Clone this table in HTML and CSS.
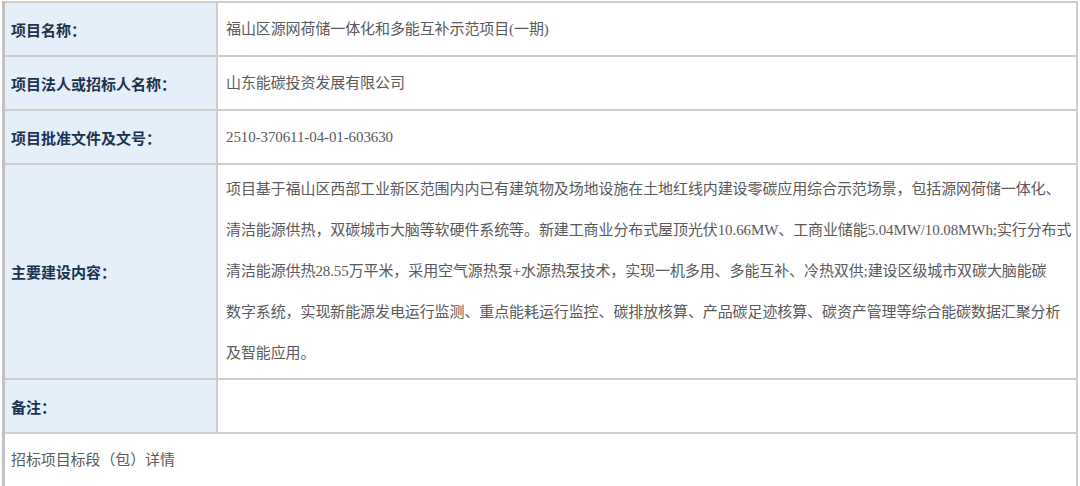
FILE: index.html
```html
<!DOCTYPE html>
<html lang="zh-CN">
<head>
    <meta charset="UTF-8">
    <meta name="viewport" content="width=device-width, initial-scale=1.0">
    <title>项目信息</title>
    <link rel="stylesheet" href="styles.css">
</head>
<body>
    <table class="info">
        <tr class="row-short">
            <th>项目名称：</th>
            <td>福山区源网荷储一体化和多能互补示范项目(一期)</td>
        </tr>
        <tr class="row-short">
            <th>项目法人或招标人名称：</th>
            <td>山东能碳投资发展有限公司</td>
        </tr>
        <tr class="row-short">
            <th>项目批准文件及文号：</th>
            <td>2510-370611-04-01-603630</td>
        </tr>
        <tr class="row-long">
            <th>主要建设内容：</th>
            <td>项目基于福山区西部工业新区范围内内已有建筑物及场地设施在土地红线内建设零碳应用综合示范场景，包括源网荷储一体化、<br>清洁能源供热，双碳城市大脑等软硬件系统等。新建工商业分布式屋顶光伏10.66MW、工商业储能5.04MW/10.08MWh;实行分布式<br>清洁能源供热28.55万平米，采用空气源热泵+水源热泵技术，实现一机多用、多能互补、冷热双供;建设区级城市双碳大脑能碳<br>数字系统，实现新能源发电运行监测、重点能耗运行监控、碳排放核算、产品碳足迹核算、碳资产管理等综合能碳数据汇聚分析<br>及智能应用。</td>
        </tr>
        <tr class="row-short">
            <th>备注：</th>
            <td></td>
        </tr>
        <tr class="row-short">
            <td class="full" colspan="2">招标项目标段（包）详情</td>
        </tr>
    </table>
</body>
</html>
```

FILE: styles.css
```css
body {
    margin: 0;
    padding: 1px 2px 0 2px;
    background: #fff;
    font-family: "Liberation Serif", "Noto Sans CJK SC", serif;
    font-size: 15px;
}
.info {
    width: 1076px;
    border-collapse: collapse;
    border: 2px solid #c2c2c2;
    border-left-width: 3px;
    table-layout: fixed;
}
.info th,
.info td {
    border: 2px solid #cdcdcd;
    text-align: left;
    vertical-align: middle;
}
.info th {
    width: 197px;
    padding: 0 8px 0 6px;
    background: #e4eff9;
    color: #1b3250;
    font-weight: bold;
}
.info td {
    padding: 0 1px 0 8px;
    color: #5a5a5a;
    line-height: 41px;
    white-space: nowrap;
    letter-spacing: -0.1px;
}
.row-short {
    height: 54px;
}
.row-long td {
    padding-top: 4px;
    padding-bottom: 4px;
}
.info td.full {
    padding-left: 6px;
}
```
